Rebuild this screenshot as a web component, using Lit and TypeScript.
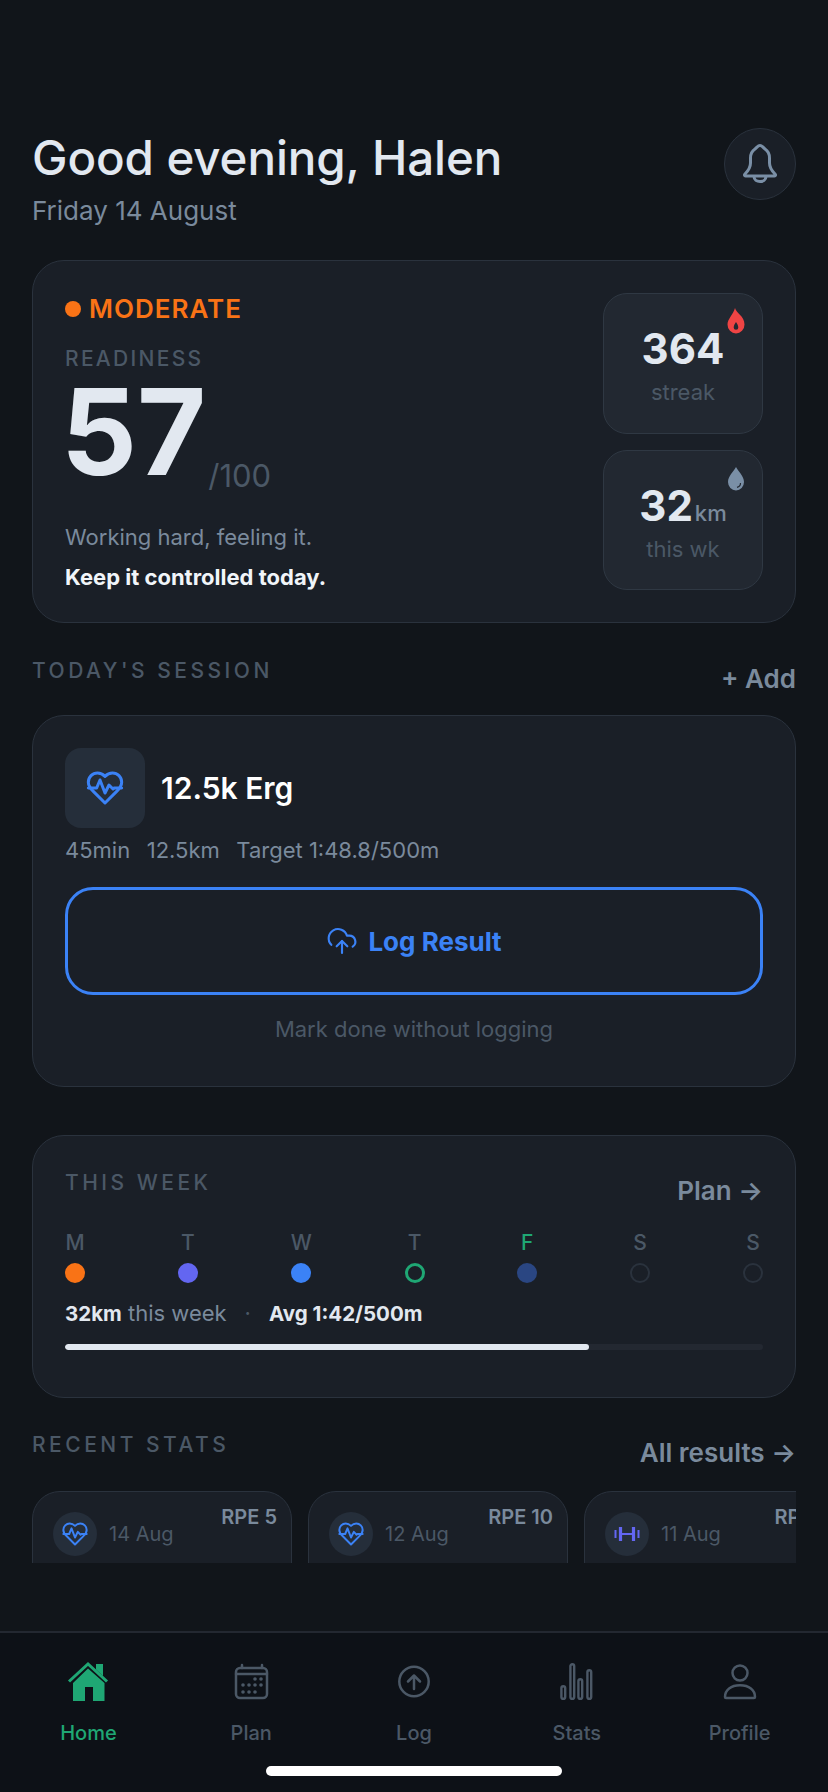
import { LitElement, css, html, svg } from "lit";
import { customElement } from "lit/decorators.js";

const heartPulse = svg`<path d="M19 14c1.49-1.46 3-3.21 3-5.5A5.5 5.5 0 0 0 16.5 3c-1.76 0-3 .5-4.5 2-1.5-1.5-2.74-2-4.5-2A5.5 5.5 0 0 0 2 8.5c0 2.3 1.5 4.05 3 5.5l7 7Z"/><path d="M2 12h5l2-4.800L12 15l2.400-4.800 2.400 2.400.7-.6H22"/>`;

const days = [
  { d: "M", dot: "orange" },
  { d: "T", dot: "indigo" },
  { d: "W", dot: "blue" },
  { d: "T", dot: "ring" },
  { d: "F", dot: "navy", today: true },
  { d: "S", dot: "empty" },
  { d: "S", dot: "empty" },
];

const recent = [
  { date: "14 Aug", rpe: "RPE 5", icon: "heart" },
  { date: "12 Aug", rpe: "RPE 10", icon: "heart" },
  { date: "11 Aug", rpe: "RPE 7", icon: "bar" },
];

@customElement("app-root")
export class AppRoot extends LitElement {
  static styles = css`
    :host {
      display: flex;
      flex-direction: column;
      width: 828px;
      height: 1792px;
      background: #11151a;
      color: #e2e8f0;
      font-family: Inter, "Liberation Sans", sans-serif;
      overflow: hidden;
    }
    main {
      flex: 1;
      min-height: 0;
      padding: 128px 32px 0;
      box-sizing: border-box;
      overflow: hidden;
    }
    .head {
      display: flex;
      justify-content: space-between;
      align-items: flex-start;
      height: 132px;
    }
    h1 {
      margin: 1px 0 0;
      font-size: 47.5px;
      line-height: 58px;
      font-weight: 550;
      letter-spacing: -0.1px;
      color: #e2e8f0;
    }
    .date {
      margin-top: 8px;
      font-size: 26px;
      line-height: 32px;
      color: #7a8a9c;
    }
    .bell {
      width: 72px;
      height: 72px;
      border-radius: 50%;
      background: #1a1f27;
      border: 1px solid #2a323d;
      box-sizing: border-box;
      display: flex;
      align-items: center;
      justify-content: center;
    }
    .card {
      background: #1a1f27;
      border: 1px solid #2a323d;
      border-radius: 32px;
      box-sizing: border-box;
    }
    .ready {
      height: 363px;
      padding: 32px;
      display: flex;
      justify-content: space-between;
    }
    .status {
      display: flex;
      align-items: center;
      gap: 8px;
      font-size: 26px;
      line-height: 32px;
      font-weight: 600;
      letter-spacing: 1px;
      color: #f97316;
    }
    .status i {
      width: 16px;
      height: 16px;
      border-radius: 50%;
      background: #f97316;
    }
    .label {
      margin-top: 21px;
      font-size: 21px;
      line-height: 26px;
      font-weight: 500;
      letter-spacing: 2.3px;
      color: #4b5866;
    }
    .score {
      display: flex;
      align-items: flex-end;
      height: 104px;
      margin-top: 8px;
    }
    .score b {
      font-size: 119px;
      line-height: 104px;
      font-weight: 700;
      color: #e2e8f0;
      margin-left: -4px;
    }
    .score span {
      font-size: 31px;
      color: #4b5866;
      line-height: 36px;
      margin: 0 0 -10px 2px;
    }
    .msg {
      margin-top: 39px;
      font-size: 22px;
      line-height: 28px;
      color: #7a8a9c;
    }
    .keep {
      margin-top: 12px;
      font-size: 22px;
      line-height: 28px;
      font-weight: 700;
      color: #f1f5f9;
    }
    .side {
      display: flex;
      flex-direction: column;
      gap: 16px;
    }
    .tile {
      position: relative;
      width: 160px;
      height: 141px;
      background: #222831;
      border: 1px solid #2f3843;
      border-radius: 24px;
      box-sizing: border-box;
      display: flex;
      flex-direction: column;
      align-items: center;
      padding-top: 30px;
    }
    .tile + .tile {
      height: 140px;
    }
    .tile b {
      display: block;
      height: 50px;
      font-size: 42px;
      line-height: 50px;
      font-weight: 700;
      color: #e2e8f0;
    }
    .tile b small {
      font-size: 22px;
      line-height: 1;
      font-weight: 500;
      color: #7a8a9c;
      margin-left: 2px;
    }
    .tile span {
      font-size: 22px;
      line-height: 28px;
      color: #4b5866;
      margin-top: 4px;
    }
    .tile svg {
      position: absolute;
      top: 14px;
      right: 17px;
    }
    .tile svg.drop {
      top: 16px;
    }
    .sec {
      display: flex;
      justify-content: space-between;
      align-items: flex-start;
      font-size: 21px;
      line-height: 26px;
      font-weight: 500;
      letter-spacing: 3.5px;
      color: #4b5866;
    }
    .sec span {
      padding-top: 2px;
    }
    .sec a {
      font-size: 26px;
      line-height: 30px;
      font-weight: 600;
      letter-spacing: 0;
      color: #7a8a9c;
      margin-top: 8px;
    }
    .today {
      margin-top: 33px;
    }
    .session {
      margin-top: 21px;
      height: 372px;
      padding: 32px;
    }
    .title {
      display: flex;
      align-items: center;
      gap: 16px;
      font-size: 30px;
      font-weight: 600;
      color: #fff;
    }
    .tbox {
      width: 80px;
      height: 80px;
      border-radius: 16px;
      background: #252e3a;
      display: flex;
      align-items: center;
      justify-content: center;
    }
    .meta {
      display: flex;
      gap: 16.5px;
      margin-top: 8px;
      font-size: 22px;
      line-height: 28px;
      color: #7a8a9c;
    }
    .log {
      margin-top: 23px;
      height: 108px;
      border: 3px solid #3b82f6;
      border-radius: 28px;
      box-sizing: border-box;
      display: flex;
      align-items: center;
      justify-content: center;
      gap: 10px;
      font-size: 26px;
      font-weight: 700;
      color: #3b82f6;
    }
    .skip {
      margin-top: 20px;
      text-align: center;
      font-size: 22px;
      line-height: 28px;
      color: #4b5866;
    }
    .week {
      margin-top: 48px;
      height: 263px;
      padding: 32px;
    }
    .days {
      display: flex;
      justify-content: space-between;
      margin-top: 24px;
    }
    .day {
      display: flex;
      flex-direction: column;
      align-items: center;
      gap: 7px;
      font-size: 21px;
      line-height: 26px;
      font-weight: 500;
      color: #4b5866;
    }
    .day.on {
      color: #1fa774;
    }
    .dot {
      width: 20px;
      height: 20px;
      border-radius: 50%;
      box-sizing: border-box;
    }
    .orange { background: #f97316; }
    .indigo { background: #6366f1; }
    .blue { background: #3b82f6; }
    .navy { background: #2a4682; }
    .ring { border: 3px solid #1fa774; }
    .empty { border: 2px solid #2a323d; }
    .sum {
      margin-top: 17px;
      font-size: 22px;
      line-height: 26px;
      color: #7a8a9c;
      display: flex;
      align-items: baseline;
    }
    .sum b {
      font-size: 20.5px;
      color: #e2e8f0;
      font-weight: 700;
    }
    .sum .sep {
      margin: 0 18px;
      color: #4b5866;
    }
    .bar {
      margin-top: 17px;
      height: 6px;
      border-radius: 3px;
      background: #232831;
      overflow: hidden;
    }
    .bar i {
      display: block;
      height: 100%;
      border-radius: 3px;
      background: #e2e8f0;
    }
    .recent-h {
      margin-top: 32px;
    }
    .row {
      display: flex;
      gap: 16px;
      margin-top: 23px;
      height: 72px;
      overflow: hidden;
    }
    .stat {
      position: relative;
      flex: 0 0 260px;
      height: 120px;
      padding: 20px;
      display: flex;
      align-items: flex-start;
      gap: 12px;
      border-radius: 28px;
      font-size: 20px;
      color: #4b5866;
    }
    .circle {
      width: 44px;
      height: 44px;
      border-radius: 50%;
      background: #252e3a;
      display: flex;
      align-items: center;
      justify-content: center;
    }
    .stat .when {
      line-height: 44px;
    }
    .stat .rpe {
      position: absolute;
      top: 12px;
      right: 14px;
      font-size: 20px;
      line-height: 26px;
      font-weight: 600;
      color: #7a8a9c;
      white-space: nowrap;
    }
    nav {
      flex: 0 0 161px;
      box-sizing: border-box;
      border-top: 2px solid #232831;
      background: #0d1117;
      padding: 28px 7px 0;
      display: flex;
      position: relative;
    }
    .tab {
      flex: 1;
      display: flex;
      flex-direction: column;
      align-items: center;
      font-size: 20px;
      line-height: 26px;
      font-weight: 500;
      color: #4b5866;
    }
    .tab svg {
      display: block;
      margin-bottom: 15px;
    }
    .tab.on {
      color: #1fa774;
    }
    .pill {
      position: absolute;
      left: 266px;
      bottom: 16px;
      width: 296px;
      height: 10px;
      border-radius: 5px;
      background: #fff;
    }
  `;

  icon(name: string) {
    if (name === "heart") {
      return html`<svg width="28" height="28" viewBox="0 0 24 24" fill="none" stroke="#3b82f6" stroke-width="1.700" stroke-linecap="round" stroke-linejoin="round">${heartPulse}</svg>`;
    }
    return html`<svg width="28" height="28" viewBox="0 0 28 28" fill="none" stroke="#6366f1"><path stroke-width="2" d="M2.500 10v8M25.500 10v8M9 14h10"/><path stroke-width="3.200" d="M7.500 7v14M20.500 7v14"/></svg>`;
  }

  render() {
    return html`
      <main>
        <div class="head">
          <div>
            <h1>Good evening, Halen</h1>
            <div class="date">Friday 14 August</div>
          </div>
          <div class="bell">
            <svg width="34" height="40" viewBox="0 0 34 40" fill="none" stroke="#7a8fa6" stroke-width="3" stroke-linejoin="round"><path d="M17 1.500C19 1.500 20 3.500 22 5C25 7 26.500 10 26.500 14V19C26.500 24 29 27 32 30C33 31 32.500 32 31.500 32H2.500C1.500 32 1 31 2 30C5 27 7.500 24 7.500 19V14C7.500 10 9 7 12 5C14 3.500 15 1.500 17 1.500Z"/><path d="M11 32.500C11 36 14 37.500 17 37.500C20 37.500 23 36 23 32.500"/></svg>
          </div>
        </div>

        <section class="card ready">
          <div>
            <div class="status"><i></i>MODERATE</div>
            <div class="label">READINESS</div>
            <div class="score"><b>57</b><span>/100</span></div>
            <div class="msg">Working hard, feeling it.</div>
            <div class="keep">Keep it controlled today.</div>
          </div>
          <div class="side">
            <div class="tile">
              <svg width="18" height="26" viewBox="0 0 18 26"><path fill="#ef4444" fill-rule="evenodd" d="M8 0c1 5 9.500 8 9.500 16.500a8.500 9 0 0 1-17 0C.5 11 6 7 8 0Zm1 14c-1 1.500-2.300 3.300-2.300 5.500a2.300 2.300 0 0 0 4.600 0C11.300 17.300 10 15.500 9 14Z"/></svg>
              <b>364</b><span>streak</span>
            </div>
            <div class="tile">
              <svg class="drop" width="18" height="24" viewBox="0 0 18 24"><path fill="#7a8fa6" d="M9 0c2 4 8 9 8 15a8 8.500 0 0 1-16 0C1 9 7 4 9 0Z"/><path fill="none" stroke="#222831" stroke-width="1.200" d="M13.500 16c0 2.500-1.500 4-3.500 4.300"/></svg>
              <b>32<small>km</small></b><span>this wk</span>
            </div>
          </div>
        </section>

        <div class="sec today"><span>TODAY'S SESSION</span><a>+ Add</a></div>
        <section class="card session">
          <div class="title">
            <div class="tbox">
              <svg width="40" height="40" viewBox="0 0 24 24" fill="none" stroke="#3b82f6" stroke-width="1.800" stroke-linecap="round" stroke-linejoin="round">${heartPulse}</svg>
            </div>
            12.5k Erg
          </div>
          <div class="meta"><span>45min</span><span>12.5km</span><span>Target 1:48.8/500m</span></div>
          <div class="log">
            <svg width="32" height="32" viewBox="0 0 24 24" fill="none" stroke="#3b82f6" stroke-width="1.600" stroke-linecap="round" stroke-linejoin="round"><path d="M4 14.899A7 7 0 1 1 15.710 8h1.790a4.500 4.500 0 0 1 2.500 8.242"/><path d="M12 12v9"/><path d="m16 16-4-4-4 4"/></svg>
            Log Result
          </div>
          <div class="skip">Mark done without logging</div>
        </section>

        <section class="card week">
          <div class="sec"><span>THIS WEEK</span><a>Plan →</a></div>
          <div class="days">
            ${days.map(
              (x) => html`<div class="day ${x.today ? "on" : ""}">${x.d}<i class="dot ${x.dot}"></i></div>`,
            )}
          </div>
          <div class="sum"><b>32km</b>&nbsp;this week<span class="sep">·</span><b>Avg 1:42/500m</b></div>
          <div class="bar"><i style="width: 75%"></i></div>
        </section>

        <div class="sec recent-h"><span>RECENT STATS</span><a>All results →</a></div>
        <div class="row">
          ${recent.map(
            (x) => html`<div class="card stat">
              <div class="circle">${this.icon(x.icon)}</div>
              <span class="when">${x.date}</span>
              <span class="rpe">${x.rpe}</span>
            </div>`,
          )}
        </div>
      </main>

      <nav>
        <div class="tab on">
          <svg width="44" height="44" viewBox="0 0 44 44"><path d="M3 20.500 22 3l19 17.500" fill="none" stroke="#1fa774" stroke-width="3"/><path fill="#1fa774" d="M30 3h7v12l-7-6.500ZM22 7.500 38.500 22v18H27V26h-8v14H7V22Z"/></svg>
          Home
        </div>
        <div class="tab">
          <svg width="44" height="44" viewBox="0 0 44 44" fill="none" stroke="#4b5866" stroke-width="2.500" stroke-linecap="round"><rect x="7" y="7" width="31" height="30" rx="4"/><path d="M7 13h31M13 4v3M33 4v3"/><g fill="#4b5866" stroke="none"><circle cx="26" cy="18" r="1.800"/><circle cx="32" cy="18" r="1.800"/><circle cx="14" cy="24" r="1.800"/><circle cx="20" cy="24" r="1.800"/><circle cx="26" cy="24" r="1.800"/><circle cx="32" cy="24" r="1.800"/><circle cx="14" cy="31" r="1.800"/><circle cx="20" cy="31" r="1.800"/><circle cx="26" cy="31" r="1.800"/></g></svg>
          Plan
        </div>
        <div class="tab">
          <svg width="44" height="44" viewBox="0 0 44 44" fill="none" stroke="#4b5866" stroke-width="2.500" stroke-linecap="round" stroke-linejoin="round"><circle cx="22" cy="20.500" r="14.700"/><path d="M22 28V14.500M16 20.500l6-6 6 6"/></svg>
          Log
        </div>
        <div class="tab">
          <svg width="44" height="44" viewBox="0 0 44 44" fill="none" stroke="#4b5866" stroke-width="2.400"><rect x="6.400" y="25.200" width="3.800" height="12.600" rx="1.900"/><rect x="15.400" y="3.200" width="3.800" height="34.600" rx="1.900"/><rect x="23.400" y="18.200" width="3.800" height="19.600" rx="1.900"/><rect x="32.400" y="9.200" width="3.800" height="28.600" rx="1.900"/></svg>
          Stats
        </div>
        <div class="tab">
          <svg width="44" height="44" viewBox="0 0 44 44" fill="none" stroke="#4b5866" stroke-width="2.500"><circle cx="22" cy="12" r="7.500"/><path d="M7 36c0-7 6-11.700 15-11.700S37 29 37 36c0 .7-.5 1-1 1H8c-.5 0-1-.3-1-1Z"/></svg>
          Profile
        </div>
        <div class="pill"></div>
      </nav>
    `;
  }
}
